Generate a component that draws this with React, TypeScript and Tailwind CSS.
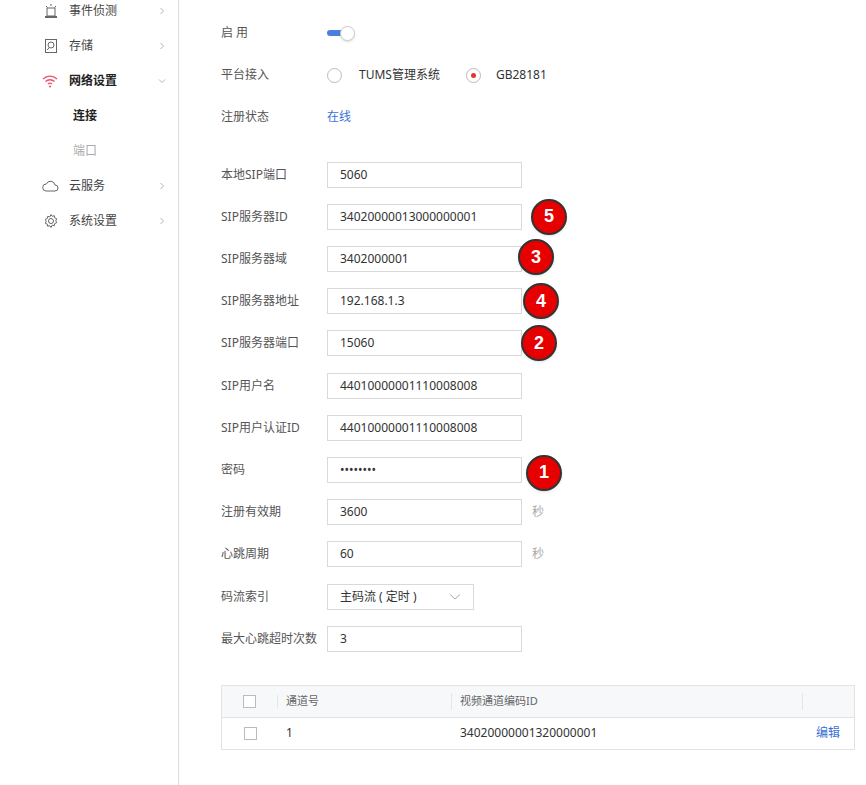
import React from "react";

const F = { fontFamily: '"Noto Sans","Noto Sans CJK SC",sans-serif' };

function Chev({ down }: { down?: boolean }) {
  return (
    <svg width="8" height="8" viewBox="0 0 8 8" className="text-[#b5b5b5]">
      {down ? <path d="M1 2.5 L4 5.5 L7 2.5" fill="none" stroke="currentColor" strokeWidth="1" /> : <path d="M2.5 1 L5.5 4 L2.5 7" fill="none" stroke="currentColor" strokeWidth="1" />}
    </svg>
  );
}

const side = [
  { t: "事件侦测", icon: "alarm" },
  { t: "存储", icon: "disk" },
  { t: "网络设置", icon: "wifi", active: true },
  { t: "连接", sub: true, bold: true },
  { t: "端口", sub: true },
  { t: "云服务", icon: "cloud" },
  { t: "系统设置", icon: "gear" },
];

function Icon({ k }: { k: string }) {
  const s = "#666";
  if (k === "alarm")
    return (<svg width="16" height="16" viewBox="0 0 16 16"><rect x="4" y="5" width="8" height="8" fill="none" stroke={s} /><rect x="2" y="13" width="12" height="2" fill={s} /><path d="M8 1v2M3 3l1.5 1.5M13 3l-1.5 1.5" stroke={s} /></svg>);
  if (k === "disk")
    return (<svg width="16" height="16" viewBox="0 0 16 16"><rect x="2.5" y="1.5" width="11" height="13" fill="none" stroke={s} /><circle cx="8" cy="7" r="3" fill="none" stroke={s} /><path d="M4 12l2-2" stroke={s} /></svg>);
  if (k === "wifi")
    return (<svg width="18" height="16" viewBox="0 0 18 16"><path d="M2 6a10 10 0 0 1 14 0M4.5 8.5a6.5 6.5 0 0 1 9 0M7 11a3 3 0 0 1 4 0" fill="none" stroke="#f0506e" strokeWidth="1.4" /><circle cx="9" cy="13.5" r="1.1" fill="#f0506e" /></svg>);
  if (k === "cloud")
    return (<svg width="18" height="16" viewBox="0 0 18 16"><path d="M5 13h9a3 3 0 0 0 0-6 4.5 4.5 0 0 0-8.6-1A3.5 3.5 0 0 0 5 13z" fill="none" stroke={s} /></svg>);
  return (<svg width="16" height="16" viewBox="0 0 16 16"><circle cx="8" cy="8" r="2.5" fill="none" stroke={s} /><path d="M8 1.5l1.2 1.8 2.1-.6.4 2.1 2 .9-.9 2 .9 2-2 .9-.4 2.1-2.1-.6L8 14.5l-1.2-1.8-2.1.6-.4-2.1-2-.9.9-2-.9-2 2-.9.4-2.1 2.1.6z" fill="none" stroke={s} /></svg>);
}

function Badge({ n, dx, dy = 0 }: { n: number; dx: number; dy?: number }) {
  return (
    <div className="absolute w-[36px] h-[36px] rounded-full bg-[#e60000] border-2 border-[#333] flex items-center justify-center text-white font-bold text-[18px] shadow"
      style={{ left: dx, top: -5 + dy, fontFamily: '"Liberation Sans",sans-serif' }}>{n}</div>
  );
}

const Row = ({ label, children, h = "h-[42.2px]" }: { label: string; children?: React.ReactNode; h?: string }) => (
  <div className={`flex items-center ${h}`}>
    <div className="w-[106px] text-[12px] text-[#555]">{label}</div>
    <div className="relative flex items-center">{children}</div>
  </div>
);

const Input = ({ v, w = "w-[195px]" }: { v: string; w?: string }) => (
  <div className={`${w} h-[26px] border border-[#d9d9d9] px-[12px] flex items-center text-[12px] text-[#333]`}>{v}</div>
);

export default function App() {
  const fields: [string, string, number?, number?, number?][] = [
    ["本地SIP端口", "5060"],
    ["SIP服务器ID", "34020000013000000001", 5, 204],
    ["SIP服务器域", "3402000001", 3, 191, -2],
    ["SIP服务器地址", "192.168.1.3", 4, 196],
    ["SIP服务器端口", "15060", 2, 194],
    ["SIP用户名", "44010000001110008008"],
    ["SIP用户认证ID", "44010000001110008008"],
    ["密码", "••••••••", 1, 199, 3],
  ];
  return (
    <div className="w-[866px] h-[785px] flex bg-white overflow-hidden" style={F}>
      <div className="w-[179px] border-r border-[#ddd] shrink-0">
        <div className="-mt-[7px]">
          {side.map((it) => (
            <div key={it.t} className="h-[35px] flex items-center">
              <div className="w-[69px] flex justify-end pr-[10px]">{it.icon && <Icon k={it.icon} />}</div>
              <div className={`flex-1 text-[12px] ${it.sub ? "pl-[4px]" : ""} ${it.bold || it.active ? "font-bold text-[#222]" : it.sub ? "text-[#aaa]" : "text-[#444]"}`}>{it.t}</div>
              {!it.sub && <div className="w-[20px]"><Chev down={it.active} /></div>}
            </div>
          ))}
        </div>
      </div>
      <div className="flex-1 pl-[42px] pt-[12px]">
        <Row label="启 用">
          <div className="relative w-[28px] h-[14px]">
            <div className="absolute left-0 top-[4px] w-[24px] h-[6px] rounded bg-[#4a7fe0]" />
            <div className="absolute left-[13px] top-0 w-[15px] h-[15px] rounded-full bg-white border border-[#ccc] shadow" />
          </div>
        </Row>
        <Row label="平台接入">
          <div className="flex items-center gap-[8px] text-[12px] text-[#333]">
            <span className="w-[15px] h-[15px] rounded-full border border-[#bbb]" />
            <span className="mr-[18px] ml-[9px]">TUMS管理系统</span>
            <span className="w-[15px] h-[15px] rounded-full border border-[#bbb] flex items-center justify-center"><span className="w-[5px] h-[5px] rounded-full bg-[#e8342f]" /></span>
            <span className="ml-[7px]">GB28181</span>
          </div>
        </Row>
        <Row label="注册状态"><span className="text-[12px] text-[#3a6fd6]">在线</span></Row>
        <div className="h-[15px]" />
        {fields.map(([l, v, b, dx, dy]) => (
          <Row key={l} label={l}>
            <Input v={v} />
            {b && <Badge n={b} dx={dx!} dy={dy} />}
          </Row>
        ))}
        <Row label="注册有效期"><Input v="3600" /><span className="ml-[10px] text-[12px] text-[#aaa]">秒</span></Row>
        <Row label="心跳周期"><Input v="60" /><span className="ml-[10px] text-[12px] text-[#aaa]">秒</span></Row>
        <Row label="码流索引">
          <div className="w-[147px] h-[26px] border border-[#d9d9d9] px-[12px] flex items-center justify-between text-[12px] text-[#333]">
            <span>主码流 ( 定时 )</span>
            <svg width="12" height="8" viewBox="0 0 12 8"><path d="M1 1.5l5 4.5 5-4.5" fill="none" stroke="#aaa" /></svg>
          </div>
        </Row>
        <Row label="最大心跳超时次数"><Input v="3" /></Row>
        <div className="mt-[25px] mr-[11px] border border-[#e3e3e3] text-[12px]">
          <div className="flex h-[32px] items-center bg-[#f7f8fa] border-b border-[#e3e3e3] text-[#666] text-[11px]">
            <div className="w-[56px] flex justify-center border-r border-[#e6e6e6]"><span className="w-[13px] h-[13px] border border-[#bbb] bg-white" /></div>
            <div className="w-[174px] pl-[8px] border-r border-[#e6e6e6]">通道号</div>
            <div className="w-[351px] pl-[8px] border-r border-[#e6e6e6]">视频通道编码ID</div>
            <div className="flex-1" />
          </div>
          <div className="flex h-[31px] items-center text-[#333]">
            <div className="w-[56px] flex justify-center"><span className="w-[13px] h-[13px] border border-[#bbb]" /></div>
            <div className="w-[174px] pl-[8px]">1</div>
            <div className="w-[351px] pl-[8px]">34020000001320000001</div>
            <div className="flex-1 text-right pr-[14px] text-[#3a6fd6]">编辑</div>
          </div>
        </div>
      </div>
    </div>
  );
}
